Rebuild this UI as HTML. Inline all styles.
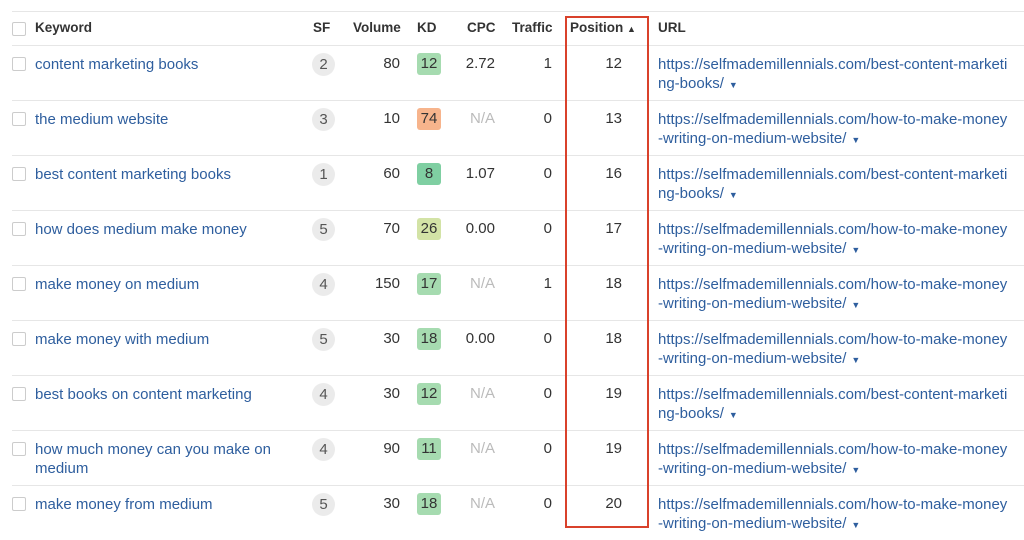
<!DOCTYPE html>
<html><head><meta charset="utf-8"><style>
*{margin:0;padding:0;box-sizing:border-box}
body{width:1024px;height:535px;background:#fff;font-family:"Liberation Sans",Arial,sans-serif;font-size:15px;color:#333;position:relative;overflow:hidden}
.hl{position:absolute;left:12px;right:0;height:1px;background:#e6e6e6}
.h{position:absolute;top:20px;font-weight:bold;font-size:13.5px;color:#333}
.row{position:absolute;left:0;width:1024px;height:55px}
.row>*{position:absolute;white-space:nowrap}
.cb{left:12px;top:12px;width:14px;height:14px;border:1px solid #ccc;border-radius:2px;background:#fff}
.kw{left:35px;top:10px;color:#2e5e9e;line-height:19px}
.sf{left:312px;top:8px;width:23px;height:23px;border-radius:50%;background:#ebebeb;text-align:center;line-height:23px;color:#555}
.vol{right:624px;top:10px;text-align:right}
.kd{left:417px;top:8px;width:24px;height:22px;border-radius:3px;text-align:center;line-height:22px;color:#333}
.cpc{right:529px;top:10px}
.na{color:#bbb}
.tr{right:472px;top:10px}
.pos{right:402px;top:10px}
.url{left:658px;top:10px;color:#2e5e9e;line-height:19px}
.url i{font-style:normal;font-size:9px;color:#2e5e9e;margin-left:5px}
.box{position:absolute;left:565px;top:16px;width:84px;height:512px;border:2px solid #d9412b}
</style></head><body>
<div class="hl" style="top:11px"></div>
<div style="position:absolute;left:12px;top:22px;width:14px;height:14px;border:1px solid #ccc;border-radius:2px"></div>
<div class="h" style="left:35px">Keyword</div>
<div class="h" style="left:313px">SF</div>
<div class="h" style="left:353px">Volume</div>
<div class="h" style="left:417px">KD</div>
<div class="h" style="left:467px">CPC</div>
<div class="h" style="left:512px">Traffic</div>
<div class="h" style="left:570px">Position <span style="font-size:9px">▲</span></div>
<div class="h" style="left:658px">URL</div>
<div class="hl" style="top:45px"></div>

<div class="row" style="top:45px"><div class="cb"></div><div class="kw">content marketing books</div><div class="sf">2</div><div class="vol">80</div><div class="kd" style="background:#a6dbb0">12</div><div class="cpc">2.72</div><div class="tr">1</div><div class="pos">12</div><div class="url">https://selfmademillennials.com/best-content-marketi<br>ng-books/<i>▼</i></div></div>
<div class="hl" style="top:100px"></div>
<div class="row" style="top:100px"><div class="cb"></div><div class="kw">the medium website</div><div class="sf">3</div><div class="vol">10</div><div class="kd" style="background:#f7b48c">74</div><div class="cpc na">N/A</div><div class="tr">0</div><div class="pos">13</div><div class="url">https://selfmademillennials.com/how-to-make-money<br>-writing-on-medium-website/<i>▼</i></div></div>
<div class="hl" style="top:155px"></div>
<div class="row" style="top:155px"><div class="cb"></div><div class="kw">best content marketing books</div><div class="sf">1</div><div class="vol">60</div><div class="kd" style="background:#7fcfa2">8</div><div class="cpc">1.07</div><div class="tr">0</div><div class="pos">16</div><div class="url">https://selfmademillennials.com/best-content-marketi<br>ng-books/<i>▼</i></div></div>
<div class="hl" style="top:210px"></div>
<div class="row" style="top:210px"><div class="cb"></div><div class="kw">how does medium make money</div><div class="sf">5</div><div class="vol">70</div><div class="kd" style="background:#d3e3a6">26</div><div class="cpc">0.00</div><div class="tr">0</div><div class="pos">17</div><div class="url">https://selfmademillennials.com/how-to-make-money<br>-writing-on-medium-website/<i>▼</i></div></div>
<div class="hl" style="top:265px"></div>
<div class="row" style="top:265px"><div class="cb"></div><div class="kw">make money on medium</div><div class="sf">4</div><div class="vol">150</div><div class="kd" style="background:#a6dbb0">17</div><div class="cpc na">N/A</div><div class="tr">1</div><div class="pos">18</div><div class="url">https://selfmademillennials.com/how-to-make-money<br>-writing-on-medium-website/<i>▼</i></div></div>
<div class="hl" style="top:320px"></div>
<div class="row" style="top:320px"><div class="cb"></div><div class="kw">make money with medium</div><div class="sf">5</div><div class="vol">30</div><div class="kd" style="background:#a6dbb0">18</div><div class="cpc">0.00</div><div class="tr">0</div><div class="pos">18</div><div class="url">https://selfmademillennials.com/how-to-make-money<br>-writing-on-medium-website/<i>▼</i></div></div>
<div class="hl" style="top:375px"></div>
<div class="row" style="top:375px"><div class="cb"></div><div class="kw">best books on content marketing</div><div class="sf">4</div><div class="vol">30</div><div class="kd" style="background:#a6dbb0">12</div><div class="cpc na">N/A</div><div class="tr">0</div><div class="pos">19</div><div class="url">https://selfmademillennials.com/best-content-marketi<br>ng-books/<i>▼</i></div></div>
<div class="hl" style="top:430px"></div>
<div class="row" style="top:430px"><div class="cb"></div><div class="kw">how much money can you make on<br>medium</div><div class="sf">4</div><div class="vol">90</div><div class="kd" style="background:#a6dbb0">11</div><div class="cpc na">N/A</div><div class="tr">0</div><div class="pos">19</div><div class="url">https://selfmademillennials.com/how-to-make-money<br>-writing-on-medium-website/<i>▼</i></div></div>
<div class="hl" style="top:485px"></div>
<div class="row" style="top:485px"><div class="cb"></div><div class="kw">make money from medium</div><div class="sf">5</div><div class="vol">30</div><div class="kd" style="background:#a6dbb0">18</div><div class="cpc na">N/A</div><div class="tr">0</div><div class="pos">20</div><div class="url">https://selfmademillennials.com/how-to-make-money<br>-writing-on-medium-website/<i>▼</i></div></div>

<div class="box"></div>
</body></html>
